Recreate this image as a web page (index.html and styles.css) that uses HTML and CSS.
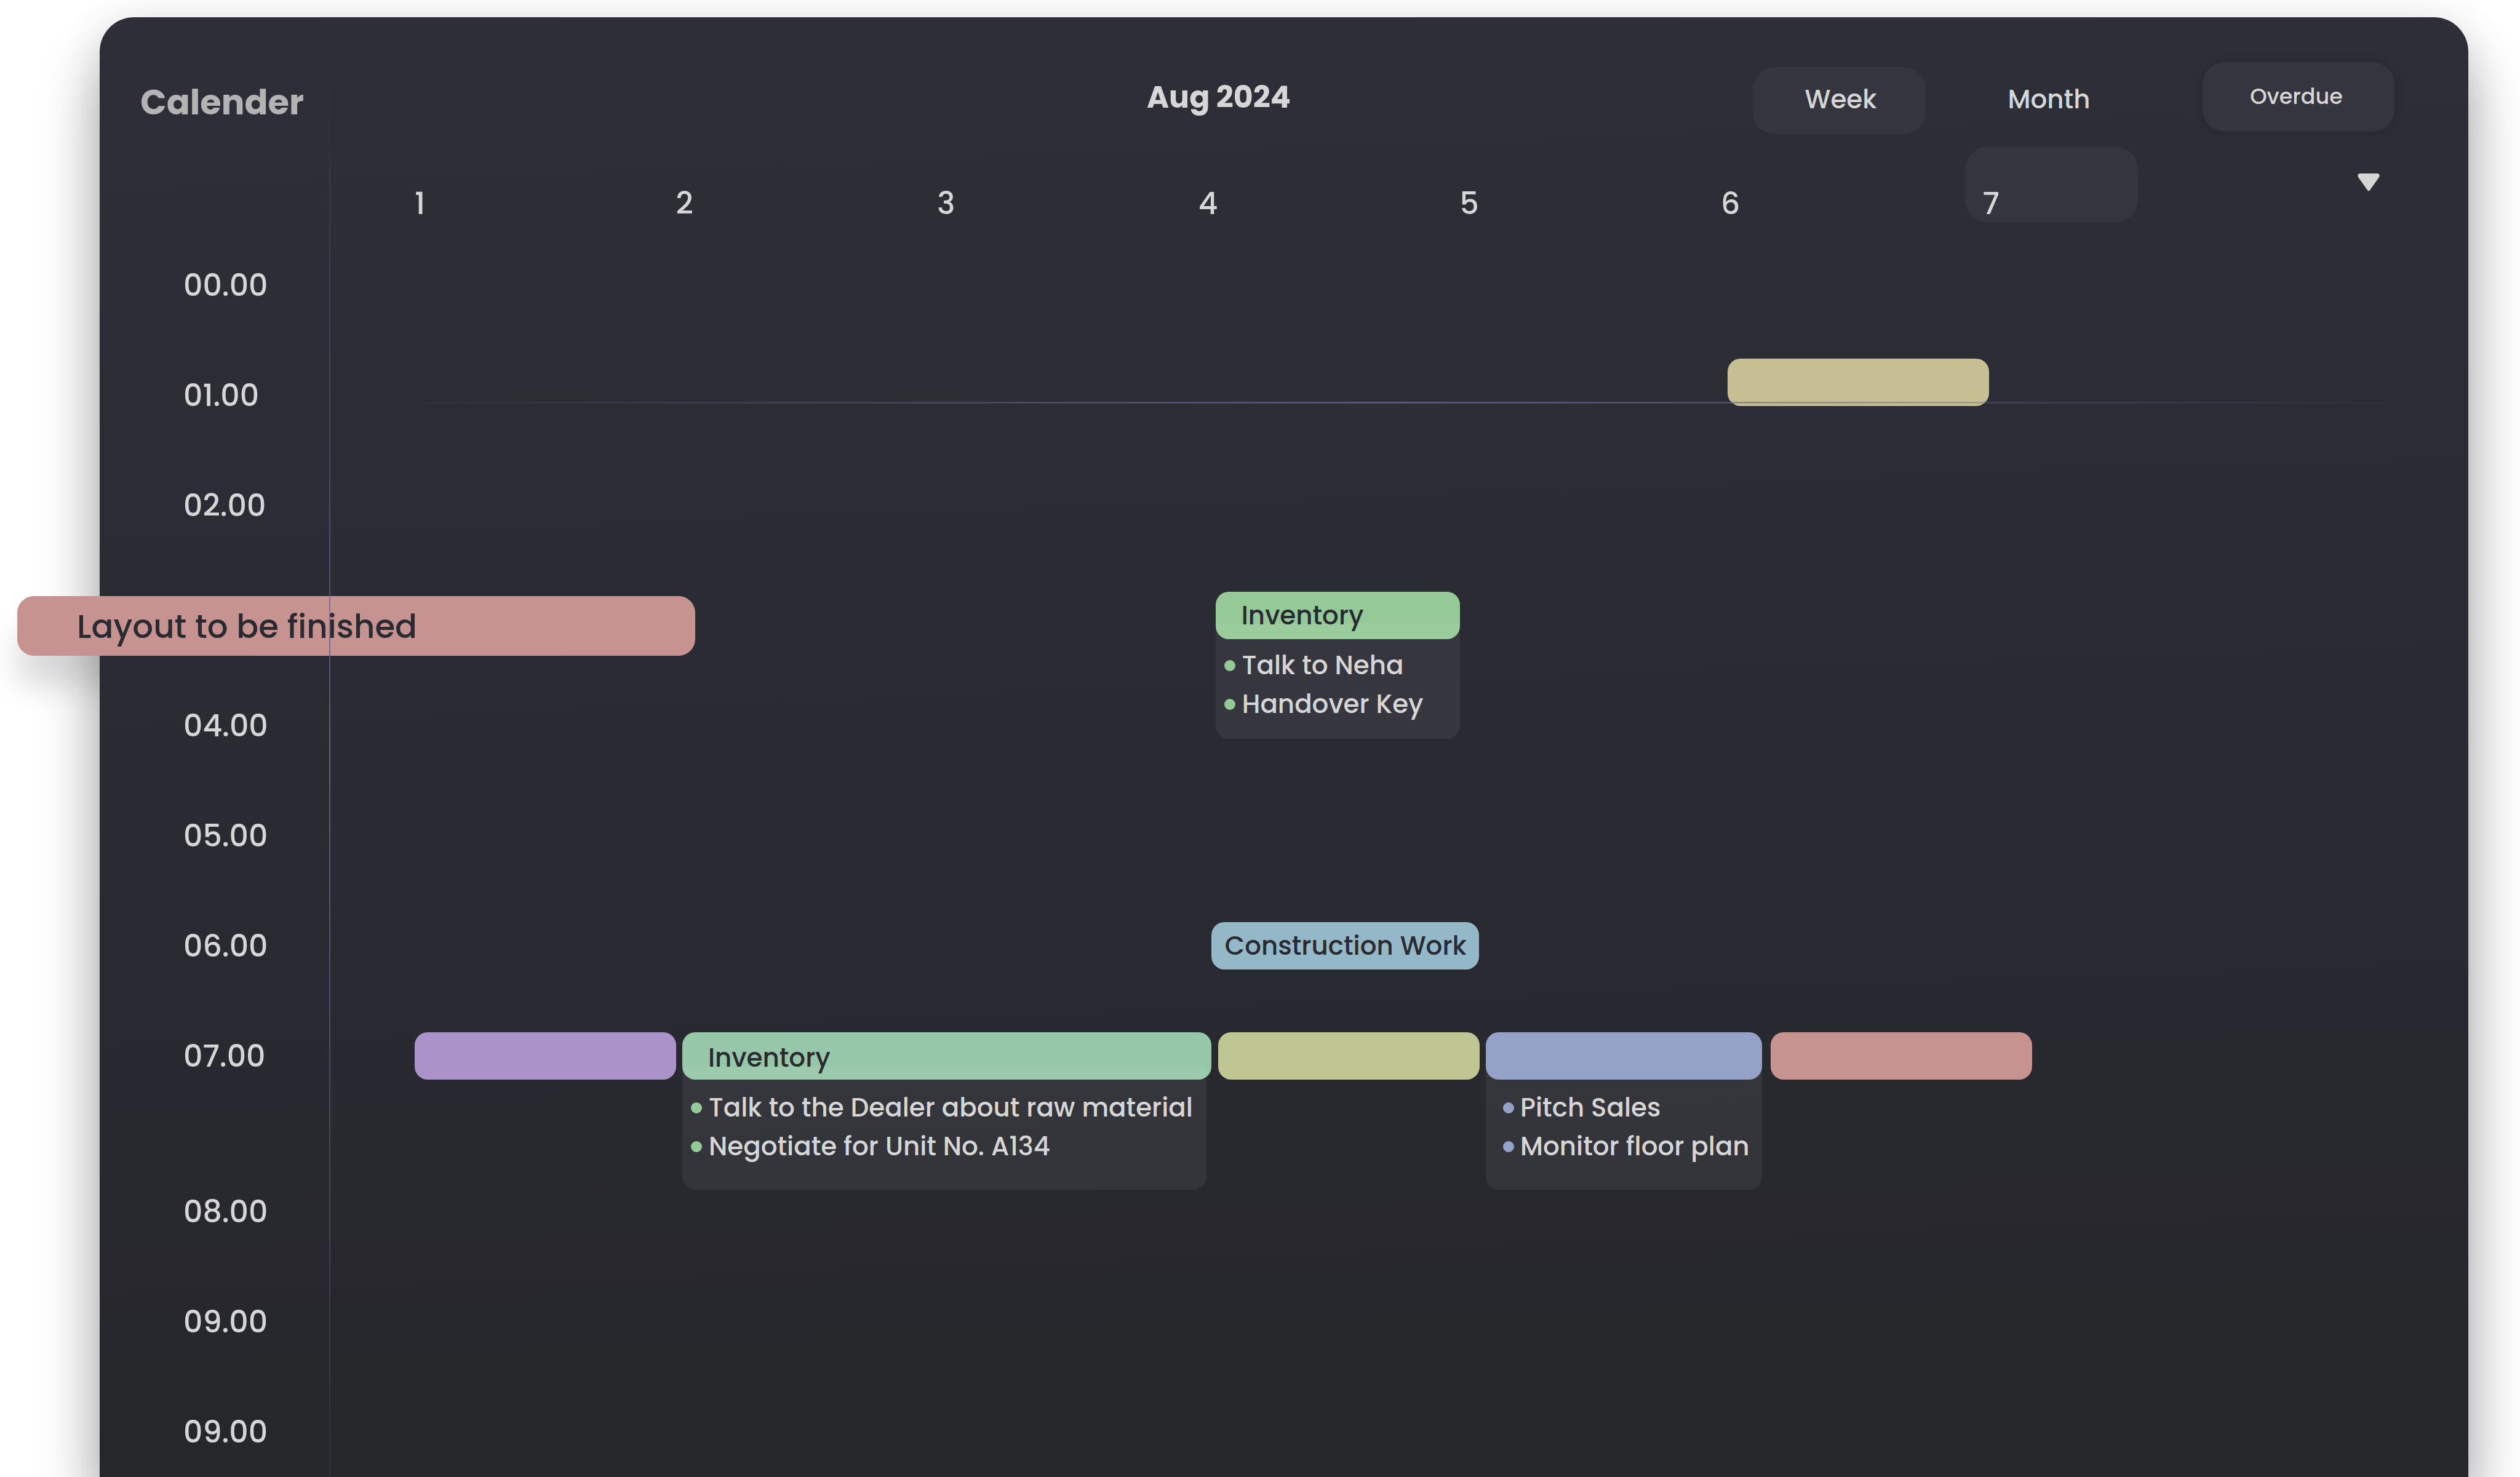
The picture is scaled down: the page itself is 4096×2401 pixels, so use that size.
FILE: index.html
```
<!DOCTYPE html>
<html lang="en">
<head>
<meta charset="utf-8">
<title>Calender</title>
<link rel="stylesheet" href="styles.css">
</head>
<body>
<main class="panel">
  <header class="header">
    <h1 class="title">Calender</h1>
    <h2 class="period">Aug 2024</h2>
    <div class="actions">
      <button class="view view-active">Week</button>
      <button class="view">Month</button>
      <button class="overdue">Overdue</button>
    </div>
  </header>

  <div class="days">
    <span class="day day-first">1</span>
    <span class="day">2</span>
    <span class="day">3</span>
    <span class="day">4</span>
    <span class="day">5</span>
    <span class="day">6</span>
    <span class="day day-current">7</span>
    <svg class="caret" viewBox="0 0 36 29" width="36" height="29"><path d="M3.500 0H32.500Q37 1 35 6L20 27Q18 30 16 27L1 6Q-1 1 3.500 0Z" fill="#d6d6d6"/></svg>
  </div>

  <div class="board">
    <span class="time">00.00</span>
    <span class="time">01.00</span>
    <span class="time">02.00</span>
    <span class="time">04.00</span>
    <span class="time">05.00</span>
    <span class="time">06.00</span>
    <span class="time">07.00</span>
    <span class="time">08.00</span>
    <span class="time">09.00</span>
    <span class="time time-last">09.00</span>

    <div class="bar sand visit"></div>
    <div class="bar rose layout">Layout to be finished</div>

    <article class="event handover">
      <div class="bar green label">Inventory</div>
      <ul class="notes">
        <li>Talk to Neha</li>
        <li>Handover Key</li>
      </ul>
    </article>

    <div class="bar sky construction">Construction Work</div>

    <div class="lane">
      <div class="bar purple day-bar"></div>
      <article class="event dealer">
        <div class="bar mint label label-low">Inventory</div>
        <ul class="notes">
          <li>Talk to the Dealer about raw material</li>
          <li>Negotiate for Unit No. A134</li>
        </ul>
      </article>
      <div class="bar olive day-bar"></div>
      <article class="event sales">
        <div class="bar blue front"></div>
        <ul class="notes notes-blue">
          <li>Pitch Sales</li>
          <li>Monitor floor plan</li>
        </ul>
      </article>
      <div class="bar rose day-bar"></div>
    </div>
  </div>

  <i class="rule-v"></i>
  <i class="rule-h"></i>
</main>
</body>
</html>
```
FILE: styles.css
```
* {
  box-sizing: border-box;
}

body {
  margin: 0;
  padding: 28px 84px 0 162px;
  height: 2401px;
  overflow: hidden;
  background: #fff;
  color: #d6d6d6;
  font-family: Poppins, Montserrat, sans-serif;
  font-weight: 500;
}

.panel {
  position: relative;
  height: 2373px;
  border-radius: 56px 56px 0 0;
  background: linear-gradient(178deg, #2e2e38 0%, #2a2a33 53%, #28282f 76%, #26272b 90%, #26272b 100%);
  box-shadow: 0 70px 100px rgba(0, 0, 0, 0.32), 0 10px 70px rgba(0, 0, 0, 0.12);
}

/* Header */

.header {
  display: flex;
  height: 211px;
}

.title {
  margin: 0;
  width: 1636px;
  padding-left: 66px;
  font-size: 56px;
  font-weight: 700;
  line-height: 277px;
  color: #b3b3b3;
}

.period {
  margin: 0 0 0 66px;
  width: 985px;
  font-size: 49px;
  font-weight: 700;
  line-height: 261px;
}

.actions {
  display: flex;
}

.view,
.overdue {
  border: 0;
  padding: 0;
  background: none;
  color: inherit;
  font: inherit;
  font-size: 42px;
  border-radius: 36px;
}

.view {
  width: 281px;
  height: 109px;
  margin-top: 81px;
  padding-bottom: 4px;
}

.view + .view {
  margin-left: 60px;
}

.view-active {
  padding-left: 5px;
  background: #35353f;
}

.overdue {
  width: 312px;
  height: 113px;
  margin: 73px 0 0 109px;
  padding-bottom: 3px;
  padding-right: 7px;
  font-size: 35px;
  background: #35353f;
  box-shadow: 0 2px 18px rgba(0, 0, 0, 0.16);
}

/* Days and time grid */

.days,
.board {
  display: grid;
  grid-template-columns: 512px repeat(7, 424.6px) 1fr;
}

.days {
  height: 134px;
  font-size: 49px;
  line-height: 184px;
}

.day-first {
  grid-column: 2;
}

.day-current {
  width: 281px;
  height: 122px;
  margin-left: -28px;
  padding-left: 29px;
  border-radius: 36px;
  background: #35353f;
}

.caret {
  margin: 43px 0 0 186px;
}

.board {
  grid-template-rows: repeat(7, 179px) 253px repeat(2, 179px) 163px;
}

.time {
  grid-column: 1;
  padding-left: 136px;
  font-size: 49px;
  line-height: 182px;
}

.time-last {
  height: 163px;
}

/* Events */

.bar {
  height: 77px;
  border-radius: 21px;
  color: #292a32;
  font-size: 42px;
  line-height: 77px;
  white-space: nowrap;
}

.sand { background: #c6bf94; }
.rose { background: #c69391; }
.green { background: #95c997; }
.sky { background: #95b8c8; }
.purple { background: #aa93c8; }
.mint { background: #95c7a8; }
.olive { background: #bfc693; }
.blue { background: #95a2c8; }

.visit {
  grid-area: 2 / 7;
  width: 425px;
  margin: 31px 0 0 11px;
}

.layout {
  grid-area: 4 / 1 / 5 / 3;
  position: relative;
  width: 1102px;
  height: 97px;
  margin: 59px 0 0 -134px;
  padding-left: 97px;
  border-radius: 27px;
  font-size: 53px;
  line-height: 99px;
}

/* The drop shadow falls on the page, behind the panel. */
.layout::before {
  content: "";
  position: absolute;
  inset: 0;
  z-index: -1;
  border-radius: inherit;
  box-shadow: 0 50px 50px rgba(0, 0, 0, 0.14);
}

.event {
  height: 240px;
}

.handover {
  grid-area: 4 / 5 / 6 / 6;
  width: 397px;
  margin: 52px 0 0 28px;
}

.label {
  padding-left: 42px;
}

.label-low {
  line-height: 84px;
}

/* The translucent sheet overlaps the lower edge of the coloured label. */
.notes {
  list-style: none;
  height: 187px;
  margin: -25px 0 0;
  padding: 36px 0 0 14px;
  border-radius: 0 0 21px 21px;
  background: rgba(255, 255, 255, 0.06);
  font-size: 42px;
  line-height: 63px;
  white-space: nowrap;
}

.notes li {
  display: flex;
  align-items: center;
}

.notes li::before {
  content: "";
  width: 18px;
  height: 18px;
  margin: 1px 11px 0 0;
  border-radius: 50%;
  background: #95c997;
}

.construction {
  grid-area: 7 / 5;
  width: 435px;
  padding-left: 2px;
  margin: 52px 0 0 21px;
  text-align: center;
}

.lane {
  grid-area: 8 / 2 / 9 / 10;
  display: flex;
  margin-top: 52px;
}

.day-bar {
  width: 425px;
}

.dealer {
  width: 860px;
  margin: 0 11px 0 10px;
}

.dealer .notes,
.sales .notes {
  height: 200px;
  margin-top: -21px;
  padding-top: 35px;
}

.dealer .notes {
  width: 852px;
}

.sales {
  width: 449px;
  margin: 0 14px 0 10px;
}

.sales .notes {
  padding-left: 28px;
}

.sales .notes li::before {
  margin-right: 10px;
}

.front {
  position: relative;
}

.notes-blue li::before {
  background: #95a2c8;
}

/* Guide lines drawn over the board */

.rule-v,
.rule-h {
  position: absolute;
}

.rule-v {
  left: 373px;
  top: 28px;
  width: 2px;
  height: 2345px;
  background: linear-gradient(rgba(98, 96, 145, 0), rgba(98, 96, 145, 0.9) 50%, rgba(98, 96, 145, 0.16));
}

.rule-h {
  left: 420px;
  right: 40px;
  top: 625px;
  height: 3px;
  background: linear-gradient(90deg, rgba(98, 96, 145, 0), rgba(98, 96, 145, 0.8) 50%, rgba(98, 96, 145, 0));
}
```
